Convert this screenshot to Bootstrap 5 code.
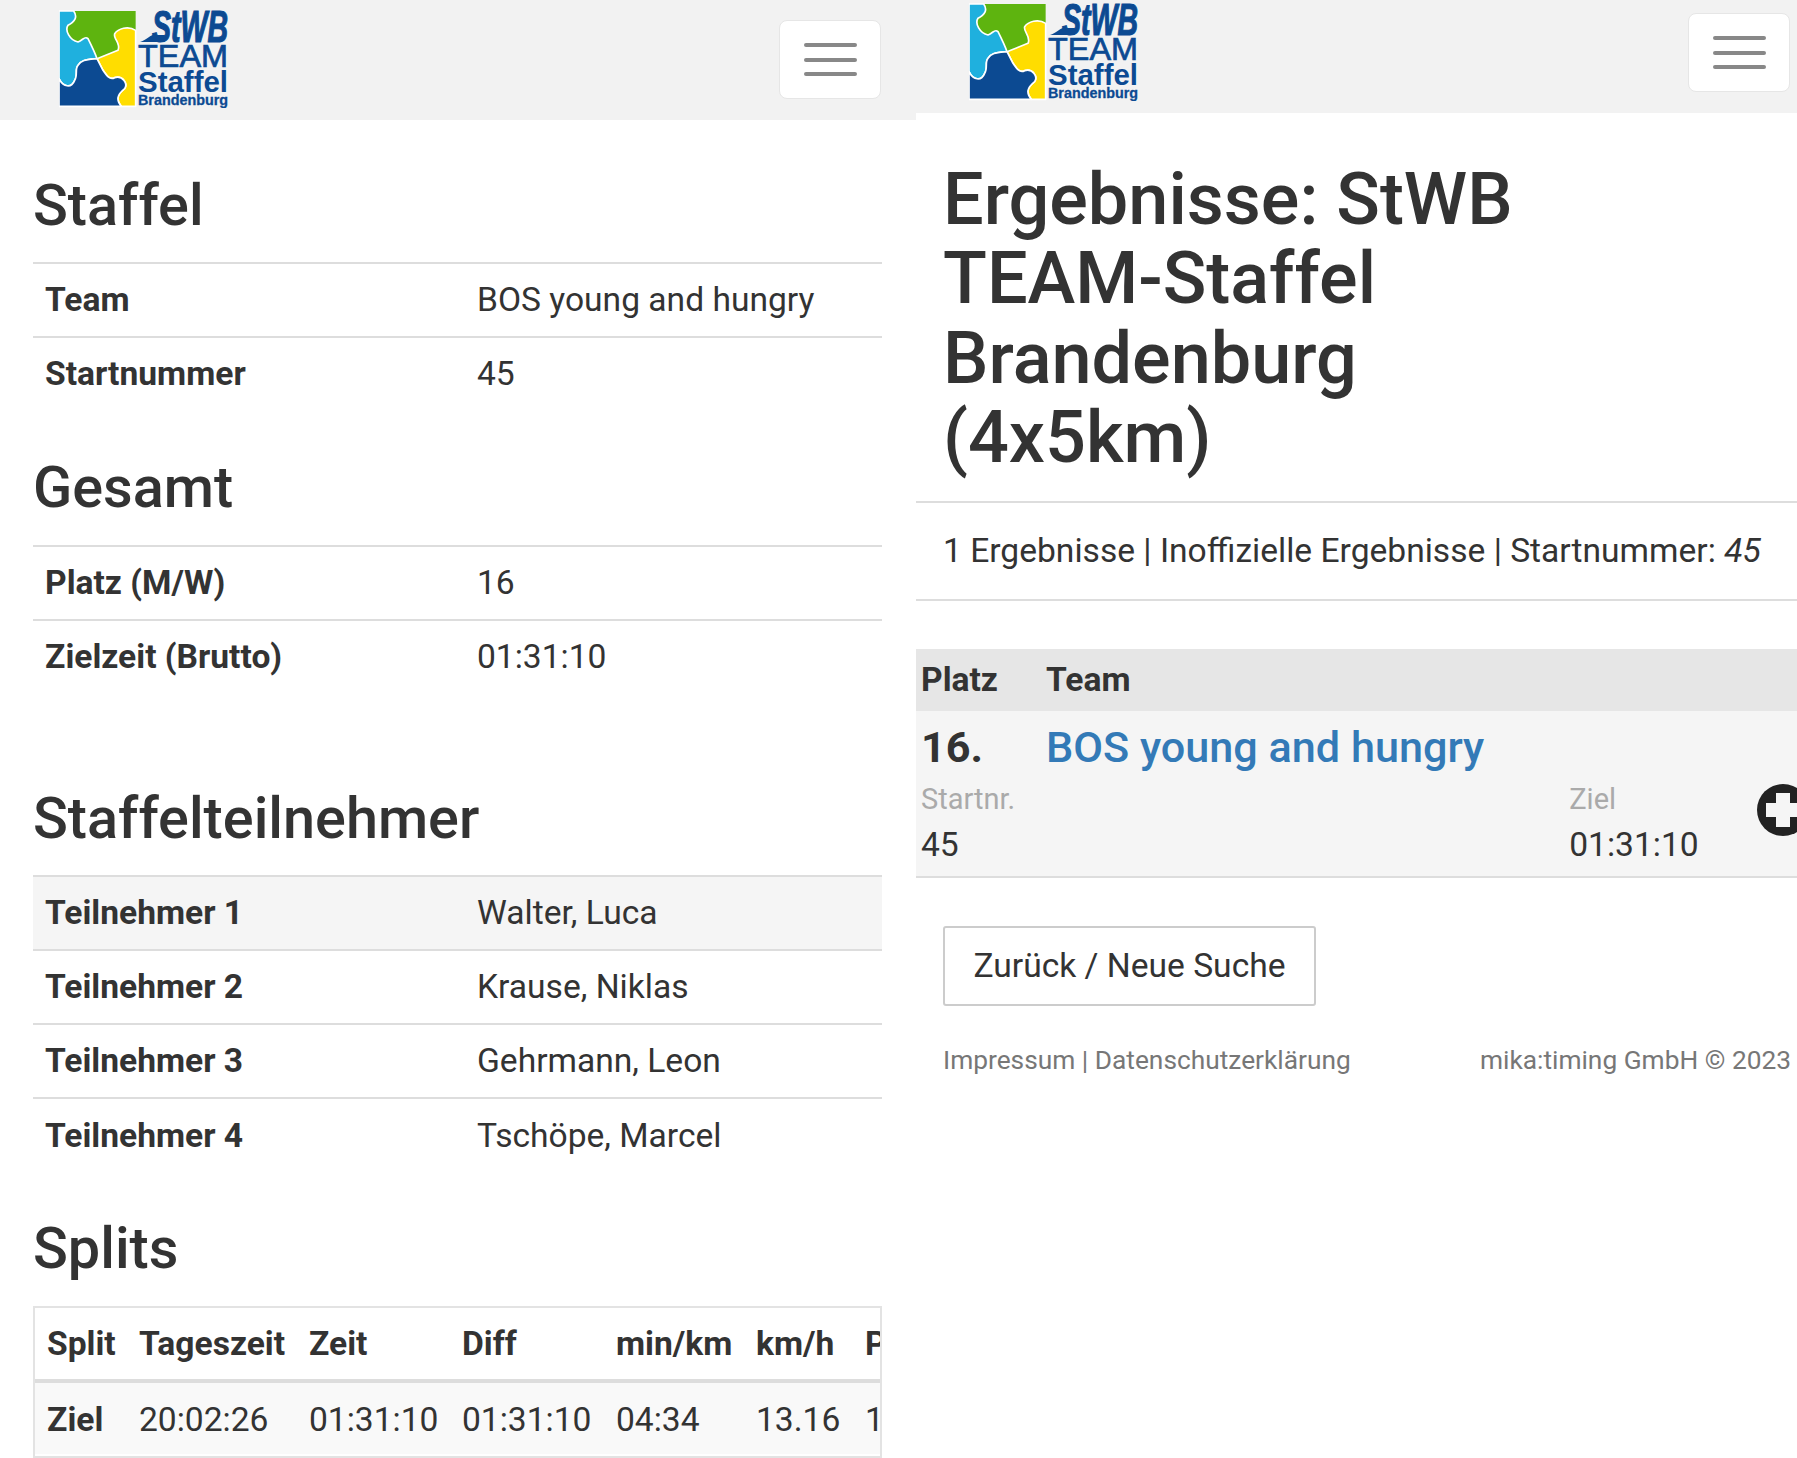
<!DOCTYPE html>
<html lang="de"><head><meta charset="utf-8"><title>Ergebnisse</title>
<link rel="stylesheet" href="https://cdn.jsdelivr.net/npm/bootstrap@5.3.0/dist/css/bootstrap.min.css">
<style>
html,body{height:1458px;overflow:hidden}
body{font-family:Roboto,"Liberation Sans",sans-serif;color:#333;background:#fff;font-size:33.6px}
.pane-left{width:916px;flex:none}
.pane-right{width:881px;flex:none;overflow:hidden;height:1458px}
.topbar{background:#f2f2f2;position:relative}
.pane-left .topbar{height:120px;padding:10px 35px 0 59px}
.pane-right .topbar{height:113px;padding:3px 7px 0 53px}
.logo-svg{width:170px;height:98px;display:block}
.burger{width:102px;height:79px;background:#fff;border:1px solid #e6e6e6;border-radius:8px;padding:0;margin-top:10px;display:flex;flex-direction:column;justify-content:center;align-items:center;gap:10.5px}
.burger span{display:block;width:53px;height:4px;border-radius:2px;background:#888}
.left-body{padding:0 34px 0 33px}
.sec-title{font-size:57.6px;font-weight:500;line-height:64px;margin:0;color:#333}
.info-tbl{margin:0;--bs-table-bg:transparent;color:#333}
.info-tbl th,.info-tbl td{border-top:2px solid #ddd;border-bottom:0;padding:0 12px;height:73.5px;vertical-align:middle;font-size:33.6px;color:#333;box-shadow:none}
.info-tbl.people th,.info-tbl.people td{height:74px;padding-top:1px}
.info-tbl th{width:432px;font-weight:700}
.info-tbl td{font-weight:400}
.info-tbl tr.hl th,.info-tbl tr.hl td{background:#f5f5f5}
.splits-wrap{border:2px solid #e3e3e3;overflow:hidden;height:152px}
.splits{border-collapse:collapse;white-space:nowrap;font-size:33.6px;table-layout:fixed;width:900px}
.splits th{height:73px;font-weight:700;border-bottom:4px solid #ddd;padding:1px 0 0 12px}
.splits td{height:73px;background:#f9f9f9;padding:3px 0 0 12px}
.page-title{font-size:72px;font-weight:500;line-height:79.3px;margin:0;padding:47px 27px 24px;border-bottom:2px solid #ddd;color:#333}
.sum-line{height:98px;border-bottom:2px solid #ddd;padding:0 0 0 27px;display:flex;align-items:center}
.res-head{margin-top:48px;height:62px;background:#e6e6e6;font-weight:700;position:relative;display:flex;align-items:center}
.res-row{height:167px;background:#f5f5f5;border-bottom:2px solid #ddd;position:relative}
.c-place{width:130px;padding-left:5px;flex:none}
.res-top{height:74px;display:flex;align-items:center;font-size:43.2px}
.res-top b{font-weight:700}
.res-top a{color:#337ab7;text-decoration:none;font-weight:500}
.lbl{color:#aaa;font-size:29px;line-height:34px}
.val{line-height:44px;margin-top:7px}
.res-cols{padding:0 0 0 5px;display:flex;margin-top:-3px}
.c-ziel{margin-left:554px}
.plus{position:absolute;left:841px;top:73px;width:52px;height:52px}
.back-btn{margin:48px 0 0 27px;width:373px;height:80px;border:2px solid #ccc;border-radius:3px;background:#fff;color:#333;font-size:33.6px;padding:0;display:block}
.foot{display:flex;justify-content:space-between;padding:36px 6px 0 27px;color:#777;font-size:26.3px;line-height:36px}
</style></head>
<body>
<div class="d-flex">
<section class="pane-left">
 <div class="topbar d-flex justify-content-between align-items-start">
  <svg class="logo-svg" viewBox="59 10 170 98" role="img" aria-label="StWB TEAM Staffel Brandenburg">
   <use href="#lg"/>
  </svg>
  <button class="burger" type="button" aria-label="Menü"><span></span><span></span><span></span></button>
 </div>
 <div class="left-body">
  <h2 class="sec-title" style="margin-top:54px;margin-bottom:24px">Staffel</h2>
  <table class="table info-tbl"><tbody>
   <tr><th>Team</th><td>BOS young and hungry</td></tr>
   <tr><th>Startnummer</th><td>45</td></tr>
  </tbody></table>
  <h2 class="sec-title" style="margin-top:46px;margin-bottom:25px">Gesamt</h2>
  <table class="table info-tbl"><tbody>
   <tr><th>Platz (M/W)</th><td>16</td></tr>
   <tr><th>Zielzeit (Brutto)</th><td>01:31:10</td></tr>
  </tbody></table>
  <h2 class="sec-title" style="margin-top:94px;margin-bottom:24px">Staffelteilnehmer</h2>
  <table class="table info-tbl people"><tbody>
   <tr class="hl"><th>Teilnehmer 1</th><td>Walter, Luca</td></tr>
   <tr><th>Teilnehmer 2</th><td>Krause, Niklas</td></tr>
   <tr><th>Teilnehmer 3</th><td>Gehrmann, Leon</td></tr>
   <tr><th>Teilnehmer 4</th><td>Tschöpe, Marcel</td></tr>
  </tbody></table>
  <h2 class="sec-title" style="margin-top:45px;margin-bottom:25px">Splits</h2>
  <div class="splits-wrap">
   <table class="splits">
    <colgroup><col style="width:92px"><col style="width:170px"><col style="width:153px"><col style="width:154px"><col style="width:140px"><col style="width:109px"><col></colgroup>
    <thead><tr><th>Split</th><th>Tageszeit</th><th>Zeit</th><th>Diff</th><th>min/km</th><th>km/h</th><th>Platz</th></tr></thead>
    <tbody><tr><td><b>Ziel</b></td><td>20:02:26</td><td>01:31:10</td><td>01:31:10</td><td>04:34</td><td>13.16</td><td>16</td></tr></tbody>
   </table>
  </div>
 </div>
</section>
<section class="pane-right">
 <div class="topbar d-flex justify-content-between align-items-start">
  <svg class="logo-svg" viewBox="59 10 170 98" role="img" aria-label="StWB TEAM Staffel Brandenburg">
   <use href="#lg"/>
  </svg>
  <button class="burger" type="button" aria-label="Menü"><span></span><span></span><span></span></button>
 </div>
 <h1 class="page-title">Ergebnisse: StWB<br>TEAM-Staffel<br>Brandenburg<br>(4x5km)</h1>
 <div class="sum-line"><span>1 Ergebnisse | Inoffizielle Ergebnisse | Startnummer: <i>45</i></span></div>
 <div class="res-head"><div class="c-place">Platz</div><div>Team</div></div>
 <div class="res-row">
  <div class="res-top"><div class="c-place"><b>16.</b></div><a href="#">BOS young and hungry</a></div>
  <div class="res-cols">
   <div><div class="lbl">Startnr.</div><div class="val">45</div></div>
   <div class="c-ziel"><div class="lbl">Ziel</div><div class="val">01:31:10</div></div>
  </div>
  <svg class="plus" viewBox="0 0 52 52"><circle cx="26" cy="26" r="26" fill="#222"/><path d="M19 9h14v10h10v14H33v10H19V33H9V19h10z" fill="#f5f5f5"/></svg>
 </div>
 <button class="back-btn" type="button">Zurück / Neue Suche</button>
 <div class="foot"><span>Impressum | Datenschutzerklärung</span><span>mika:timing GmbH © 2023</span></div>
</section>
</div>
<svg width="0" height="0" class="position-absolute" aria-hidden="true"><defs>
 <g id="lg">
  <g transform="translate(59 11) scale(.3333) translate(-178 -32)" stroke="#fff" stroke-width="5" stroke-linejoin="round">
   <path fill="#5eb40f" d="M178 32H408V318H178Z" stroke="none"/>
   <path fill="#1fb0de" d="M178 32L222 32C235 50 225 65 205 75C195 90 210 120 235 125C250 120 255 105 265 115C275 135 285 155 292 175C260 178 245 178 235 195C225 205 235 225 225 240C215 265 190 260 178 235Z"/>
   <path fill="#ffdd00" d="M408 90L408 318L365 318C350 300 350 285 375 265C385 250 370 225 345 232C330 240 320 225 310 210L292 175L355 150C365 130 340 115 345 100C355 85 385 75 408 90Z"/>
   <path fill="#0c4a92" d="M178 235C190 260 215 265 225 240C235 225 225 205 235 195C245 178 260 178 292 175L310 210C320 225 330 240 345 232C370 225 385 250 375 265C350 285 350 300 365 318L178 318Z"/>
  </g>
  <g fill="#0c4a92" font-family="'Liberation Sans',sans-serif" font-weight="700">
   <path d="M140 42c6-2 9-6 13-7h12l-2 7z"/>
   <text x="152" y="42" font-size="44" stroke="#0c4a92" stroke-width="1.2" font-style="italic" textLength="76" lengthAdjust="spacingAndGlyphs">StWB</text>
   <text x="138" y="67" font-size="30.6" font-weight="400" stroke="#0c4a92" stroke-width=".7" textLength="90" lengthAdjust="spacingAndGlyphs">TEAM</text>
   <text x="138" y="92" font-size="29" textLength="90" lengthAdjust="spacingAndGlyphs">Staffel</text>
   <text x="138" y="105" font-size="14" stroke="#0c4a92" stroke-width=".3" textLength="90" lengthAdjust="spacingAndGlyphs">Brandenburg</text>
  </g>
 </g>
</defs></svg>
<script src="https://cdn.jsdelivr.net/npm/bootstrap@5.3.0/dist/js/bootstrap.bundle.min.js"></script>
</body></html>
